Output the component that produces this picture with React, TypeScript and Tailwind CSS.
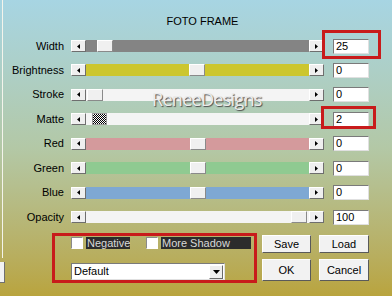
import React from "react";

const FONT = "font-['Liberation_Sans',Arial,sans-serif]";

function Arrow({ dir }: { dir: "left" | "right" }) {
  return (
    <div className="flex h-[12px] w-[15px] shrink-0 items-center justify-center border-t border-l border-t-white border-l-white border-b border-r border-b-[#6e6e6e] border-r-[#6e6e6e] bg-[#efefef]">
      <svg width="3" height="5" viewBox="0 0 3 5">
        {dir === "left" ? <path d="M3 0 L0 2.5 L3 5Z" fill="#000" /> : <path d="M0 0 L3 2.5 L0 5Z" fill="#000" />}
      </svg>
    </div>
  );
}

type RowData = {
  label: string;
  track: string;
  thumb: number;
  value: string;
  h: string;
  matte?: boolean;
  mark?: 1 | 2;
};

const rows: RowData[] = [
  { label: "Width", track: "bg-[#848484]", thumb: 11, value: "25", h: "h-[24px]", mark: 1 },
  { label: "Brightness", track: "bg-[#ccc62e]", thumb: 103, value: "0", h: "h-[24px]" },
  { label: "Stroke", track: "bg-[#f4f4f4]", thumb: 1, value: "0", h: "h-[25px]" },
  { label: "Matte", track: "bg-[#f4f4f4]", thumb: 6, value: "2", h: "h-[24px]", matte: true, mark: 2 },
  { label: "Red", track: "bg-[#d49a9c]", thumb: 104, value: "0", h: "h-[25px]" },
  { label: "Green", track: "bg-[#8fca91]", thumb: 104, value: "0", h: "h-[24px]" },
  { label: "Blue", track: "bg-[#7ea8d3]", thumb: 104, value: "0", h: "h-[25px]" },
  { label: "Opacity", track: "bg-[#f4f4f4]", thumb: 205, value: "100", h: "h-[24px]" },
];

function Bar({ r }: { r: RowData }) {
  return (
    <div className="ml-[7px] flex h-[12px] w-[253px] shrink-0">
      <Arrow dir="left" />
      <div className={`flex h-[12px] flex-1 ${r.track}`}>
        {r.matte ? (
          <div
            className="h-[12px] w-[15px] shrink-0 border border-[#9a9a9a] bg-[image:repeating-conic-gradient(#000_0_25%,#fff_0_50%)] bg-[length:2px_2px]"
            style={{ marginLeft: r.thumb }}
          />
        ) : (
          <div
            className="h-[12px] w-[16px] shrink-0 border-t border-l border-t-white border-l-white border-b border-r border-b-[#8a8a8a] border-r-[#8a8a8a] bg-[#f0f0f0]"
            style={{ marginLeft: r.thumb }}
          />
        )}
      </div>
      <Arrow dir="right" />
    </div>
  );
}

function Input({ r }: { r: RowData }) {
  return (
    <div className="relative ml-[9px] h-[15px] w-[36px] shrink-0">
      <div className="flex h-[15px] w-[36px] items-center border-t border-l border-t-[#7a7a7a] border-l-[#7a7a7a] border-b border-r border-b-[#e0e0e0] border-r-[#e0e0e0] bg-white pl-[2px] text-[11px] leading-[13px] text-black">
        {r.value}
      </div>
      {r.mark === 1 && (
        <div className="absolute left-[-11px] top-[-9px] h-[29px] w-[59px] border-[3px] border-[#c81b1b]" />
      )}
      {r.mark === 2 && (
        <div className="absolute left-[-12px] top-[-6px] h-[23px] w-[55px] border-[3px] border-[#c81b1b]" />
      )}
    </div>
  );
}

function Btn({ label, w, h }: { label: string; w: string; h: string }) {
  return (
    <div
      className={`flex ${w} ${h} items-center justify-center border-t border-l border-t-white border-l-white border-b border-r border-b-[#5a5a5a] border-r-[#5a5a5a] bg-[#f2f2f2] text-[11px] text-black`}
    >
      {label}
    </div>
  );
}

function Check({ label, w }: { label: string; w: string }) {
  return (
    <div className="flex items-center">
      <div className="h-[12px] w-[12px] border-t border-l border-t-[#8a8a8a] border-l-[#8a8a8a] border-b border-r border-b-white border-r-white bg-white" />
      <div className={`ml-[3px] flex h-[12px] ${w} items-center bg-[#2c2c2c] pl-[1px] text-[11px] leading-[12px] text-[#d8d8d8]`}>
        {label}
      </div>
    </div>
  );
}

export default function App() {
  return (
    <div
      className={`${FONT} relative flex h-[296px] w-[392px] overflow-hidden bg-gradient-to-b from-[#a7d5e3] via-[#b3c8a6] to-[#b9a43d] text-black`}
    >
      {/* left group edge */}
      <div className="flex w-[6px] shrink-0 flex-col">
        <div className="h-[258px] w-[3px] border-r border-r-[#f4f4ec]" />
        <div className="mt-[4px] h-[21px] w-[5px] border-b border-r border-b-[#707070] border-r-[#707070] bg-[#f2f2f2]" />
      </div>

      <div className="flex flex-1 flex-col">
        <div className="h-[28px] pl-[7px] pt-[15px] text-center text-[11px] leading-[13px]">FOTO FRAME</div>

        <div className="mt-[6px] flex flex-col">
          {rows.map((r) => (
            <div key={r.label} className={`flex ${r.h} items-center`}>
              <div className="w-[58px] shrink-0 text-right text-[11px] leading-[13px]">{r.label}</div>
              <Bar r={r} />
              <Input r={r} />
            </div>
          ))}
        </div>

        <div className="mt-[4px] flex">
          <div className="ml-[46px] flex h-[50px] w-[205px] flex-col border-[3px] border-[#c81b1b] pl-[16px]">
            <div className="mt-[1px] flex items-center">
              <Check label="Negative" w="w-[44px]" />
              <div className="ml-[16px]">
                <Check label="More Shadow" w="w-[90px]" />
              </div>
            </div>
            <div className="mt-[14px] flex h-[17px] w-[154px] items-center border-t border-l border-t-[#7a7a7a] border-l-[#7a7a7a] border-b border-r border-b-[#e0e0e0] border-r-[#e0e0e0] bg-white">
              <div className="flex-1 pl-[2px] text-[11px] leading-[13px]">Default</div>
              <div className="mr-[1px] flex h-[14px] w-[14px] items-center justify-center border-t border-l border-t-white border-l-white border-b border-r border-b-[#6a6a6a] border-r-[#6a6a6a] bg-[#eeeeee]">
                <svg width="7" height="4" viewBox="0 0 7 4">
                  <path d="M0 0 L7 0 L3.5 4Z" fill="#000" />
                </svg>
              </div>
            </div>
          </div>

          <div className="ml-[5px] mt-[2px] flex flex-col">
            <div className="flex">
              <Btn label="Save" w="w-[49px]" h="h-[18px]" />
              <div className="ml-[8px]">
                <Btn label="Load" w="w-[50px]" h="h-[18px]" />
              </div>
            </div>
            <div className="mt-[6px] flex">
              <Btn label="OK" w="w-[49px]" h="h-[22px]" />
              <div className="ml-[8px]">
                <Btn label="Cancel" w="w-[50px]" h="h-[22px]" />
              </div>
            </div>
          </div>
        </div>
      </div>

      {/* watermark */}
      <div className="pointer-events-none absolute left-[152px] top-[88px] font-['Open_Sans',sans-serif] text-[18px] leading-[22px] tracking-[-0.7px] text-[#ececec] [text-shadow:1px_1px_1px_#4a4a4a]">
        ReneeDesigns
      </div>
    </div>
  );
}
